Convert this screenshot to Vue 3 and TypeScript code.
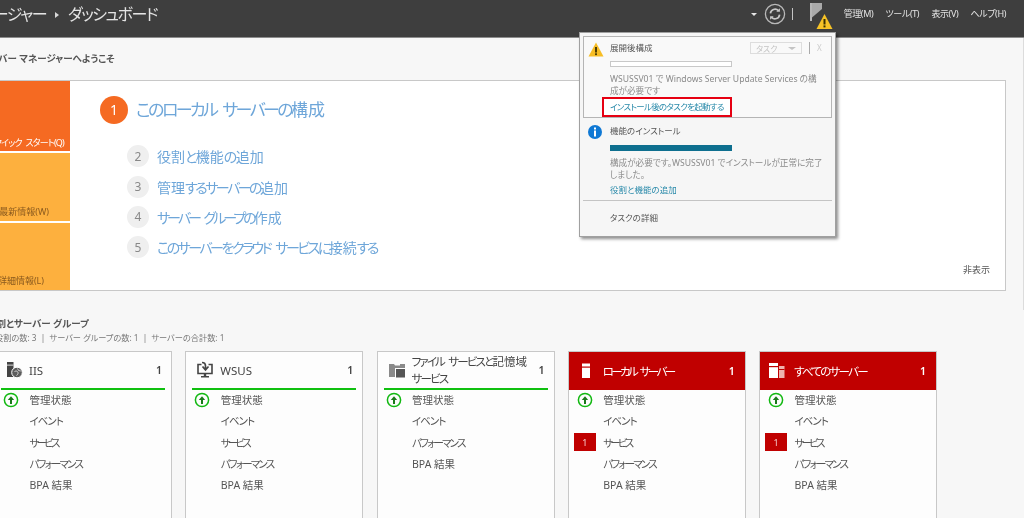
<script setup lang="ts">
interface Row {
  label: string
  status?: boolean
  badge?: number
}

interface Card {
  title: string
  track: string
  icon: string
  alert: boolean
  rows: Row[]
}

// the original UI font has narrow kana: tighten the kana runs, leave kanji at full width
const runs = (text: string) =>
  (text.match(/[\u3040-\u30ff\s]+|[^\u3040-\u30ff\s]+/g) ?? []).map((part) => ({
    text: part,
    kana: /[\u3040-\u30ff]/.test(part),
  }))

const title = { text: 'このローカル サーバーの構成', track: '-2.6px' }

const steps = [
  { no: 2, text: '役割と機能の追加', track: '-1.5px' },
  { no: 3, text: '管理するサーバーの追加', track: '-2.5px' },
  { no: 4, text: 'サーバー グループの作成', track: '-3px' },
  { no: 5, text: 'このサーバーをクラウド サービスに接続する', track: '-2.5px' },
]

const rowTrack: Record<string, string> = {
  'イベント': '-1px',
  'サービス': '-2.8px',
  'パフォーマンス': '-1.8px',
}

const menus = ['管理(M)', 'ツール(T)', '表示(V)', 'ヘルプ(H)']

const baseRows = (badge?: number): Row[] => [
  { label: '管理状態', status: true },
  { label: 'イベント' },
  { label: 'サービス', badge },
  { label: 'パフォーマンス' },
  { label: 'BPA 結果' },
]

const cards: Card[] = [
  { title: 'IIS', track: '0', icon: 'iis', alert: false, rows: baseRows() },
  { title: 'WSUS', track: '0', icon: 'wsus', alert: false, rows: baseRows() },
  {
    title: 'ファイル サービスと記憶域\nサービス',
    track: '-1.8px',
    icon: 'file',
    alert: false,
    rows: [
      { label: '管理状態', status: true },
      { label: 'イベント' },
      { label: 'パフォーマンス' },
      { label: 'BPA 結果' },
    ],
  },
  { title: 'ローカル サーバー', track: '-2.6px', icon: 'local', alert: true, rows: baseRows(1) },
  { title: 'すべてのサーバー', track: '-1.75px', icon: 'all', alert: true, rows: baseRows(1) },
]
</script>

<template>
  <div class="app">
    <!-- Header -->
    <header class="topbar">
      <h1 class="crumb">サーバー マネージャー<span class="crumb__arrow"></span>ダッシュボード</h1>
      <div class="tools">
        <span class="tools__caret"></span>
        <svg class="tools__refresh" width="22" height="22" viewBox="0 0 22 22" fill="none">
          <circle cx="11" cy="11" r="9.6" stroke="#b9b9b9" stroke-width="1.3" />
          <path d="M6.4 10.4a4.7 4.7 0 0 1 8-2.8" stroke="#c8c8c8" stroke-width="1.7" />
          <path d="M15.6 11.6a4.7 4.7 0 0 1-8 2.8" stroke="#c8c8c8" stroke-width="1.7" />
          <path d="M15.9 5.2v3.6h-3.6z M6.1 16.8v-3.6h3.6z" fill="#c8c8c8" />
        </svg>
        <span class="tools__sep"></span>
        <svg class="tools__flag" width="26" height="30" viewBox="0 0 26 30">
          <rect x="0" y="3" width="2" height="18" fill="#b5b5b5" />
          <path d="M2 3H12V9L2 17.500z" fill="#a9a9a9" />
          <path d="M14.500 14 22.500 29h-16z" fill="#f7c326" />
          <rect x="13.500" y="19" width="2" height="5.500" fill="#3a3000" />
          <rect x="13.500" y="25.400" width="2" height="2" fill="#3a3000" />
        </svg>
        <nav class="menu">
          <span v-for="m in menus" :key="m">{{ m }}</span>
        </nav>
      </div>
    </header>

    <main class="page">
      <h2 class="welcome">サーバー マネージャーへようこそ</h2>

      <!-- Quick start panel -->
      <section class="panel">
        <div class="side">
          <div class="side__item side__item--active">クイック スタート(Q)</div>
          <div class="side__item">最新情報(W)</div>
          <div class="side__item">詳細情報(L)</div>
        </div>
        <div class="start">
          <div class="start__head">
            <span class="start__no">1</span>
            <span class="start__title"><span
              v-for="(run, i) in runs(title.text)"
              :key="i"
              :style="run.kana ? { letterSpacing: title.track } : undefined"
            >{{ run.text }}</span></span>
          </div>
          <ul class="steps">
            <li v-for="s in steps" :key="s.no" class="steps__item">
              <span class="steps__no">{{ s.no }}</span>
              <span><span
                v-for="(run, i) in runs(s.text)"
                :key="i"
                :style="run.kana ? { letterSpacing: s.track } : undefined"
              >{{ run.text }}</span></span>
            </li>
          </ul>
          <div class="start__hide">非表示</div>
        </div>
      </section>

      <!-- Roles -->
      <section class="roles">
        <h3 class="roles__title">役割とサーバー グループ</h3>
        <p class="roles__sub">役割の数: 3 &nbsp;|&nbsp; サーバー グループの数: 1 &nbsp;|&nbsp; サーバーの合計数: 1</p>
        <div class="cards">
          <article v-for="c in cards" :key="c.title" class="card" :class="{ 'card--alert': c.alert }">
            <div class="card__head">
              <svg class="card__icon" width="18" height="18" viewBox="0 0 18 18">
                <template v-if="c.icon === 'iis'">
                  <rect x="2" y="1" width="6.500" height="15" fill="#444" />
                  <rect x="2" y="3.600" width="6.500" height="1" fill="#ddd" />
                  <circle cx="12" cy="11.500" r="5.300" fill="#5c5c5c" stroke="#fff" stroke-width="1" />
                  <path d="M9.500 10.500c2-1 3-.2 3.500 1s-1 2.500-1.500 3.200M12.500 7.500l1 2 2.300.5" fill="none" stroke="#ddd" stroke-width=".9" />
                </template>
                <template v-else-if="c.icon === 'wsus'">
                  <path d="M5.500 3.500H2v9h14v-9h-3.500" fill="none" stroke="#444" stroke-width="1.600" />
                  <path d="M6 1.500c2.500 0 3.500 1.500 3.500 3.500v3M6.500 5.500 9.500 9l3-3.500" fill="none" stroke="#444" stroke-width="1.700" />
                  <rect x="7.800" y="12.500" width="2.400" height="2.500" fill="#444" />
                  <rect x="5" y="15" width="8" height="1.500" fill="#444" />
                </template>
                <template v-else-if="c.icon === 'file'">
                  <path d="M1 3h5l1 1.500h6V7H7v9H1z" fill="#8a8a8a" />
                  <rect x="8" y="8" width="9" height="8.500" fill="#555" />
                  <rect x="12" y="3" width="5" height="4" fill="#8a8a8a" />
                </template>
                <template v-else-if="c.icon === 'local'">
                  <rect x="5" y="1.500" width="8" height="14.500" fill="#fff" />
                  <rect x="5" y="4.500" width="8" height="1.200" fill="#c00000" />
                </template>
                <template v-else>
                  <rect x="1" y="1" width="9" height="15" fill="#fff" />
                  <rect x="1" y="4" width="9" height="1.200" fill="#c00000" />
                  <rect x="11" y="4" width="5.500" height="12" fill="#eeb4ae" />
                  <rect x="11" y="7" width="5.500" height="1" fill="#c00000" />
                </template>
              </svg>
              <span class="card__title"><span
                v-for="(run, i) in runs(c.title)"
                :key="i"
                :style="run.kana ? { letterSpacing: c.track } : undefined"
              >{{ run.text }}</span></span>
              <span class="card__count">1</span>
            </div>
            <ul class="card__rows">
              <li v-for="r in c.rows" :key="r.label" class="card__row">
                <span class="card__mark">
                  <svg v-if="r.status" width="16" height="16" viewBox="0 0 16 16" fill="none">
                    <circle cx="8" cy="8" r="6.600" stroke="#12b812" stroke-width="1.500" />
                    <path d="M8 12V7.500" stroke="#1a7a1a" stroke-width="2" />
                    <path d="M4.800 8 8 4.300 11.200 8z" fill="#1a7a1a" />
                  </svg>
                  <span v-else-if="r.badge" class="card__badge">{{ r.badge }}</span>
                </span>
                <span :style="{ letterSpacing: rowTrack[r.label] }">{{ r.label }}</span>
              </li>
            </ul>
          </article>
        </div>
      </section>
    </main>

    <!-- Scrollbar thumb at the window edge -->
    <span class="scroll"></span>

    <!-- Notification popup -->
    <aside class="popup">
      <div class="note note--boxed">
        <svg class="note__icon" width="16" height="15" viewBox="0 0 16 15">
          <path d="M8 .500 15.500 14.500H.500z" fill="#f7bd24" />
          <rect x="7.100" y="5" width="1.800" height="5.500" fill="#3a3000" />
          <rect x="7.100" y="11.300" width="1.800" height="1.800" fill="#3a3000" />
        </svg>
        <div class="note__body">
          <div class="note__head">
            <span class="note__title">展開後構成</span>
            <span class="note__task">タスク<i class="note__caret"></i></span>
            <span class="note__sep"></span>
            <span class="note__close">X</span>
          </div>
          <div class="bar"></div>
          <p class="note__text">WSUSSV01 で Windows Server Update Services の構<br>成が必要です</p>
          <a class="note__link note__link--marked">インストール後のタスクを起動する</a>
        </div>
      </div>

      <div class="note">
        <svg class="note__icon" width="16" height="16" viewBox="0 0 16 16">
          <circle cx="8" cy="8" r="7" fill="#0f78d4" />
          <rect x="7" y="6.500" width="2" height="6" fill="#fff" />
          <rect x="7" y="3.500" width="2" height="2" fill="#fff" />
        </svg>
        <div class="note__body">
          <div class="note__title">機能のインストール</div>
          <div class="bar bar--full"></div>
          <p class="note__text">構成が必要です。WSUSSV01 でインストールが正常に完了<br>しました。</p>
          <a class="note__link">役割と機能の追加</a>
        </div>
      </div>

      <div class="popup__foot">タスクの詳細</div>
    </aside>
  </div>
</template>

<style>
html,
body {
  margin: 0;
  background: #f7f7f7;
}
</style>

<style scoped>
.app {
  position: relative;
  width: 1024px;
  height: 518px;
  overflow: hidden;
  background: #f7f7f7;
  color: #555;
  font-family: "Noto Sans", "Noto Sans CJK JP", sans-serif;
  font-feature-settings: "palt";
  filter: blur(0.4px);
}

ul {
  list-style: none;
  margin: 0;
  padding: 0;
}

/* Header */
.topbar {
  display: flex;
  align-items: center;
  justify-content: space-between;
  box-sizing: border-box;
  height: 38px;
  background: #3e3e3e;
  border-bottom: 1px solid #8c8c8c;
}

.crumb {
  margin: 0 0 12px -92px;
  font-size: 16px;
  font-weight: 400;
  letter-spacing: -1.5px;
  color: #e4e4e4;
  white-space: nowrap;
}

.crumb__arrow {
  display: inline-block;
  margin: 0 9px 2px 9px;
  border-left: 4px solid #d8d8d8;
  border-top: 3px solid transparent;
  border-bottom: 3px solid transparent;
}

.tools {
  display: flex;
  align-items: center;
  height: 100%;
  padding-right: 18px;
}

.tools__caret {
  margin: 0 7px 9px 0;
  border-top: 3px solid #e6e6e6;
  border-left: 3px solid transparent;
  border-right: 3px solid transparent;
}

.tools__refresh {
  margin-bottom: 9px;
  margin-right: 6px;
}

.tools__sep {
  width: 1px;
  height: 12px;
  margin: 0 17px 9px 0;
  background: #c4c4c4;
}

.tools__flag {
  margin: 0 8px 8px 0;
}

.menu {
  display: flex;
  gap: 12.300px;
  margin-bottom: 10px;
  font-size: 9px;
  letter-spacing: -0.4px;
  color: #e4e4e4;
  white-space: nowrap;
}

/* Welcome + panel */
.welcome {
  margin: 0 0 0 -20px;
  height: 42px;
  font-size: 9.500px;
  font-weight: 700;
  line-height: 42px;
  color: #555;
}

.panel {
  display: flex;
  box-sizing: border-box;
  width: 1006px;
  height: 211px;
  background: #fff;
  border: 1px solid #c8c8c8;
  border-left: 0;
}

.side {
  display: flex;
  flex-direction: column;
  gap: 2px;
  width: 70px;
  flex-shrink: 0;
  overflow: hidden;
  white-space: nowrap;
}

.side__item {
  flex: 1;
  display: flex;
  align-items: flex-end;
  justify-content: flex-end;
  padding-bottom: 3px;
  background: #fdb03e;
  color: #8a5a1e;
  font-size: 9px;
}

.side__item:nth-child(2) {
  padding-right: 21px;
}

.side__item:nth-child(3) {
  padding-right: 26px;
}

.side__item--active {
  flex: 0 0 68px;
  padding: 0 6px 2px 0;
  background: #f56a22;
  color: #fff;
  letter-spacing: -0.8px;
  word-spacing: 2px;
}

.start {
  position: relative;
  flex: 1;
  padding: 15px 0 0 30px;
}

.start__head {
  display: flex;
  align-items: center;
  gap: 8px;
  font-size: 17px;
  line-height: 28px;
  color: #6ea6d9;
}

.start__title {
  word-spacing: 4px;
}

.start__no {
  display: flex;
  align-items: center;
  justify-content: center;
  width: 28px;
  height: 28px;
  border-radius: 50%;
  background: #f56a22;
  color: #fff;
  font-size: 14px;
}

.steps {
  display: flex;
  flex-direction: column;
  gap: 8px;
  margin: 21px 0 0 27px;
}

.steps__item {
  display: flex;
  align-items: center;
  gap: 8px;
  height: 22.400px;
  font-size: 14px;
  color: #6ea6d9;
  word-spacing: 4px;
}

.steps__no {
  display: flex;
  align-items: center;
  justify-content: center;
  width: 22px;
  height: 22px;
  border-radius: 50%;
  background: #efefef;
  color: #888;
  font-size: 12px;
}

.start__hide {
  position: absolute;
  right: 15px;
  bottom: 14px;
  font-size: 9px;
  color: #555;
}

/* Roles */
.roles {
  padding-top: 26px;
}

.roles__title {
  margin: 0 0 0 -13px;
  font-size: 9.500px;
  font-weight: 700;
  line-height: 14px;
  color: #555;
}

.roles__sub {
  margin: 0 0 0 -5px;
  font-size: 8.200px;
  line-height: 14px;
  color: #777;
}

.cards {
  display: grid;
  grid-template-columns: repeat(5, 178px);
  gap: 13.250px;
  margin: 6px 0 0 -6px;
}

.card {
  box-sizing: border-box;
  height: 200px;
  background: #fdfdfd;
  border: 1px solid #c8c8c8;
}

.card__head {
  display: flex;
  align-items: center;
  height: 36px;
  margin: 0 6px;
  padding: 0 3px 0 0;
  border-bottom: 2px solid #10c010;
}

.card__icon {
  flex-shrink: 0;
  margin: 0 6px 0 4px;
}

.card__title {
  flex: 1;
  font-size: 11.500px;
  line-height: 17px;
  color: #444;
  white-space: pre-line;
  word-spacing: 3px;
}

.card__count {
  font-size: 10.500px;
  font-weight: 600;
  color: #444;
}

.card--alert .card__head {
  height: 38px;
  margin: 0;
  padding: 0 10px 0 4px;
  background: #c00000;
  border-bottom: 0;
}

.card--alert .card__icon {
  margin-right: 8px;
}

.card--alert .card__title,
.card--alert .card__count {
  color: #fff;
}

.card__rows {
  margin-top: -1px;
}

.card__row {
  display: flex;
  align-items: center;
  height: 21.300px;
  font-size: 10.500px;
  color: #555;
}

.card__mark {
  display: flex;
  align-items: center;
  justify-content: center;
  width: 28px;
  margin: 0 4.500px 0 2px;
  flex-shrink: 0;
}

.card__badge {
  display: flex;
  align-items: center;
  justify-content: center;
  width: 22px;
  height: 18px;
  background: #c00000;
  color: #f6cccc;
  font-size: 9px;
}

.scroll {
  position: absolute;
  top: 38px;
  right: 0;
  width: 1px;
  height: 272px;
  background: #dcdcdc;
}

/* Popup */
.popup {
  position: absolute;
  top: 32px;
  left: 579px;
  box-sizing: border-box;
  width: 257px;
  height: 205px;
  padding: 3px;
  background: #f6f6f6;
  border: 1px solid #a0a0a0;
  box-shadow: 2px 2px 3px rgba(0, 0, 0, 0.45);
}

.note {
  display: flex;
  padding: 6px 6px 0 4px;
}

.note--boxed {
  box-sizing: border-box;
  height: 82px;
  padding-top: 4px;
  background: #f9f9f9;
  border: 1px solid #b5b5b5;
}

.note__icon {
  flex-shrink: 0;
  margin: 0 7px 0 0;
}

.note--boxed .note__icon {
  margin: 1px 6px 0 0;
}

.note__body {
  flex: 1;
  min-width: 0;
}

.note__head {
  display: flex;
  align-items: center;
  height: 13px;
}

.note__title {
  flex: 1;
  font-size: 8.500px;
  line-height: 13px;
  color: #555;
}

.note__task {
  display: flex;
  align-items: center;
  justify-content: space-between;
  box-sizing: border-box;
  width: 52px;
  height: 12px;
  margin-top: 1px;
  padding: 0 5px;
  border: 1px solid #ddd;
  font-size: 8px;
  color: #c4c4c4;
}

.note__caret {
  border-top: 3px solid #c4c4c4;
  border-left: 4px solid transparent;
  border-right: 4px solid transparent;
}

.note__sep {
  width: 1px;
  height: 12px;
  margin: 0 7px;
  background: #aaa;
}

.note__close {
  width: 8px;
  font-size: 8px;
  color: #ccc;
}

.bar {
  box-sizing: border-box;
  width: 122px;
  height: 6px;
  margin-top: 7px;
  background: #fff;
  border: 1px solid #c8c8c8;
}

.bar--full {
  margin-top: 8px;
  background: #0e6f8f;
  border-color: #0e6f8f;
}

.note__text {
  margin: 5.500px 0 0;
  font-size: 8.600px;
  line-height: 12px;
  color: #8a8a8a;
  white-space: nowrap;
}

.note__link {
  display: block;
  margin-top: 3px;
  font-size: 8.500px;
  line-height: 12px;
  color: #2a8aaa;
}

.note__link--marked {
  box-sizing: border-box;
  width: 130px;
  height: 20px;
  margin: 0 0 0 -8px;
  padding-left: 6px;
  border: 2px solid #e60012;
  background: #fff;
  line-height: 16px;
  letter-spacing: -0.7px;
  white-space: nowrap;
}

.popup__foot {
  margin-top: 4px;
  padding: 11px 0 0 27px;
  border-top: 1px solid #c4c4c4;
  font-size: 8.500px;
  line-height: 12px;
  color: #555;
}
</style>
